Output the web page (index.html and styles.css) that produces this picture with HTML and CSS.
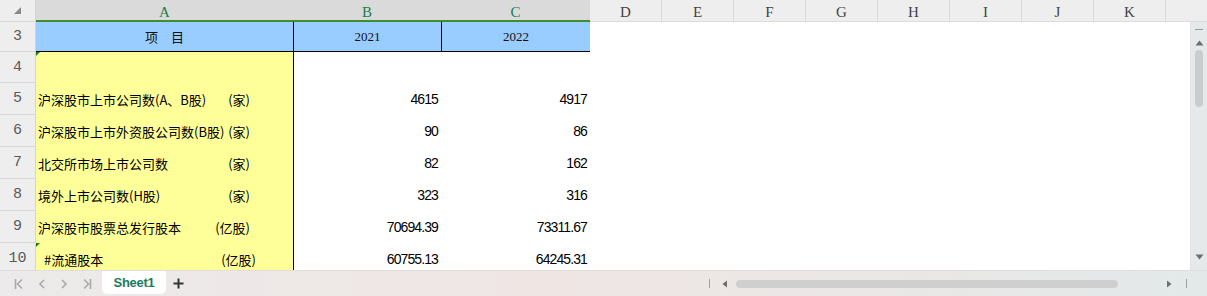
FILE: index.html
```html
<!DOCTYPE html>
<html lang="zh-CN">
<head>
    <meta charset="UTF-8">
    <meta name="viewport" content="width=device-width, initial-scale=1.0">
    <title>Sheet1</title>
    <link rel="stylesheet" href="styles.css">
</head>
<body>

    <div class="book">
        <div class="sheet">

            <!-- Column headers -->
            <div class="corner">
                <svg width="8" height="8" viewBox="0 0 8 8"><polygon points="7,0 7,7 0,7" fill="#8a8a8a"/></svg>
            </div>
            <div class="colhead sel">A</div>
            <div class="colhead sel">B</div>
            <div class="colhead sel">C</div>
            <div class="colhead">D</div>
            <div class="colhead">E</div>
            <div class="colhead">F</div>
            <div class="colhead">G</div>
            <div class="colhead">H</div>
            <div class="colhead">I</div>
            <div class="colhead">J</div>
            <div class="colhead">K</div>
            <div class="colhead tail"></div>

            <!-- Vertical scrollbar -->
            <div class="vscroll">
                <span class="split"></span>
                <svg class="arrow" width="9" height="6" viewBox="0 0 9 6"><polygon points="4.5,0.5 8.5,5.5 0.5,5.5" fill="#6e6e6e"/></svg>
                <span class="thumb"></span>
                <svg class="arrow down" width="9" height="6" viewBox="0 0 9 6"><polygon points="0.5,0.5 8.5,0.5 4.5,5.5" fill="#6e6e6e"/></svg>
            </div>

            <!-- Row 3 -->
            <div class="rowhead">3</div>
            <div class="cell title">项　目</div>
            <div class="cell title year first">2021</div>
            <div class="cell title year second">2022</div>
            <div class="cell blank"></div>

            <!-- Row 4 -->
            <div class="rowhead">4</div>
            <div class="cell label mark"></div>
            <div class="cell num first"></div>
            <div class="cell num"></div>
            <div class="cell blank"></div>

            <!-- Row 5 -->
            <div class="rowhead">5</div>
            <div class="cell label"><span>沪深股市上市公司数(A、B股)</span><span class="unit">(家)</span></div>
            <div class="cell num first">4615</div>
            <div class="cell num">4917</div>
            <div class="cell blank"></div>

            <!-- Row 6 -->
            <div class="rowhead">6</div>
            <div class="cell label"><span>沪深股市上市外资股公司数(B股)</span><span class="unit">(家)</span></div>
            <div class="cell num first">90</div>
            <div class="cell num">86</div>
            <div class="cell blank"></div>

            <!-- Row 7 -->
            <div class="rowhead">7</div>
            <div class="cell label"><span>北交所市场上市公司数</span><span class="unit">(家)</span></div>
            <div class="cell num first">82</div>
            <div class="cell num">162</div>
            <div class="cell blank"></div>

            <!-- Row 8 -->
            <div class="rowhead">8</div>
            <div class="cell label"><span>境外上市公司数(H股)</span><span class="unit">(家)</span></div>
            <div class="cell num first">323</div>
            <div class="cell num">316</div>
            <div class="cell blank"></div>

            <!-- Row 9 -->
            <div class="rowhead">9</div>
            <div class="cell label"><span>沪深股市股票总发行股本</span><span class="unit">(亿股)</span></div>
            <div class="cell num first">70694.39</div>
            <div class="cell num">73311.67</div>
            <div class="cell blank"></div>

            <!-- Row 10 -->
            <div class="rowhead">10</div>
            <div class="cell label mark sub"><span>#流通股本</span><span class="unit">(亿股)</span></div>
            <div class="cell num first">60755.13</div>
            <div class="cell num">64245.31</div>
            <div class="cell blank"></div>
        </div>

        <!-- Sheet tabs and horizontal scrollbar -->
        <div class="tabbar">
            <div class="nav">
                <svg width="10" height="12" viewBox="0 0 10 12"><path d="M1.5 1v10M8 1.5L3.5 6 8 10.5" fill="none" stroke="#a9a9a9" stroke-width="1.6"/></svg>
                <svg width="8" height="12" viewBox="0 0 8 12"><path d="M6 2L2 6l4 4" fill="none" stroke="#a9a9a9" stroke-width="1.6"/></svg>
                <svg width="8" height="12" viewBox="0 0 8 12"><path d="M2 2l4 4-4 4" fill="none" stroke="#a9a9a9" stroke-width="1.6"/></svg>
                <svg width="10" height="12" viewBox="0 0 10 12"><path d="M2 1.5L6.5 6 2 10.5M8.5 1v10" fill="none" stroke="#a9a9a9" stroke-width="1.6"/></svg>
            </div>
            <div class="tab">Sheet1</div>
            <svg class="add" width="11" height="11" viewBox="0 0 11 11"><path d="M5.5 0.5v10M0.5 5.5h10" stroke="#333" stroke-width="2"/></svg>

            <div class="hscroll">
                <span class="stop"></span>
                <svg width="6" height="8" viewBox="0 0 6 8"><polygon points="5,0.5 5,7.5 0.5,4" fill="#6e6e6e"/></svg>
                <span class="track"></span>
                <svg width="6" height="8" viewBox="0 0 6 8"><polygon points="1,0.5 1,7.5 5.5,4" fill="#6e6e6e"/></svg>
                <span class="stop"></span>
            </div>
        </div>
    </div>

</body>
</html>
```

FILE: styles.css
```css
body {
    margin: 0;
    background: #fff;
    font-family: "Liberation Sans", Arial, sans-serif;
}

.book {
    width: 1207px;
    height: 296px;
    overflow: hidden;
}

/* Grid of the sheet */
.sheet {
    display: grid;
    grid-template-columns: 36px 257px 148px 149px repeat(8, 72px) 24px 17px;
    grid-template-rows: 22px 30px 31px repeat(6, 32px);
    height: 270px;
    overflow: hidden;
}

.corner {
    background: #eeeeee;
    border-right: 1px solid #d4d4d4;
    border-bottom: 1px solid #d4d4d4;
    box-sizing: border-box;
    display: flex;
    justify-content: flex-end;
    align-items: flex-end;
    padding: 0 13px 6px 0;
}

.colhead {
    background: #eeeeee;
    color: #444;
    font-family: "Liberation Serif", serif;
    font-size: 15px;
    border-right: 1px solid #dadada;
    border-bottom: 1px solid #dcdcdc;
    box-sizing: border-box;
    display: flex;
    justify-content: center;
    align-items: center;
    padding-top: 3px;
}

.colhead.sel {
    background: #dadada;
    color: #1d7a4c;
    border-right: none;
    border-bottom: 2px solid #3f8d2b;
    padding-top: 4px;
}

.colhead.tail {
    grid-column: 13 / 15;
    border-right: none;
}

.rowhead {
    background: #eeeeee;
    color: #5a5a5a;
    font-family: "Liberation Mono", monospace;
    font-size: 15px;
    border-right: 1px solid #d4d4d4;
    border-bottom: 1px solid #d6d6d6;
    box-sizing: border-box;
    display: flex;
    justify-content: center;
    align-items: center;
}

.cell {
    box-sizing: border-box;
    position: relative;
    min-width: 0;
}

.cell.title {
    background: #99ccff;
    border-bottom: 1px solid #000;
    display: flex;
    justify-content: center;
    align-items: center;
    font-family: "Noto Sans CJK SC", sans-serif;
    font-size: 13px;
    color: #111;
}

.cell.year {
    font-family: "Liberation Serif", "Times New Roman", serif;
    font-size: 13px;
}

.cell.first {
    border-left: 1px solid #000;
}

.cell.second {
    border-left: 1px solid #000;
}

.cell.label {
    background: #ffff99;
    display: flex;
    align-items: flex-end;
    padding: 0 43px 7px 2px;
    font-family: "Noto Sans CJK SC", sans-serif;
    font-size: 13px;
    line-height: 16px;
    color: #000;
    white-space: nowrap;
}

.cell.label .unit {
    margin-left: auto;
}

.cell.label.sub {
    padding-left: 8px;
    padding-right: 37px;
}

/* small green marker in the corner of a cell */
.cell.mark::before {
    content: "";
    position: absolute;
    left: 0;
    top: 0;
    border-top: 4px solid #1d7a1d;
    border-right: 4px solid transparent;
}

.cell.num {
    display: flex;
    justify-content: flex-end;
    align-items: flex-end;
    padding: 0 3px 8px 0;
    font-size: 14px;
    letter-spacing: -0.9px;
    line-height: 16px;
    color: #000;
}

.cell.blank {
    grid-column: 5 / 14;
}

/* Vertical scrollbar */
.vscroll {
    grid-column: 14;
    grid-row: 2 / 10;
    background: #e5e9e9;
    border-left: 1px solid #dfe3e3;
    display: flex;
    flex-direction: column;
    align-items: center;
    padding-top: 7px;
}

.vscroll .split {
    width: 8px;
    height: 1px;
    background: #9a9a9a;
}

.vscroll .arrow {
    margin-top: 10px;
}

.vscroll .thumb {
    width: 8px;
    height: 57px;
    margin-top: 4px;
    border-radius: 4px;
    background: #c9cdcd;
}

.vscroll .down {
    margin-top: 147px;
}

/* Bottom bar */
.tabbar {
    height: 26px;
    display: flex;
    align-items: center;
    background: linear-gradient(to right, #eceaea, #efe6e4 45%, #ebe7e6 70%, #e3e9e9);
    border-top: 1px solid #e2dcdb;
    box-sizing: border-box;
}

.nav {
    display: flex;
    align-items: center;
    gap: 14px;
    padding-left: 14px;
    width: 88px;
}

.tab {
    align-self: flex-start;
    width: 64px;
    height: 23px;
    background: #fff;
    border-radius: 0 0 5px 5px;
    display: flex;
    justify-content: center;
    align-items: center;
    font-weight: bold;
    font-size: 13px;
    letter-spacing: -0.3px;
    color: #1a7b62;
}

.add {
    margin-left: 7px;
}

.hscroll {
    margin-left: auto;
    display: flex;
    align-items: center;
    width: 486px;
    padding-right: 12px;
}

.hscroll .stop {
    width: 1px;
    height: 9px;
    background: #a0a0a0;
}

.hscroll svg {
    margin: 0 8px 0 12px;
}

.hscroll svg:last-of-type {
    margin: 0 14px 0 48px;
}

.hscroll .track {
    width: 382px;
    height: 8px;
    border-radius: 4px;
    background: #cfcfcf;
}
```
